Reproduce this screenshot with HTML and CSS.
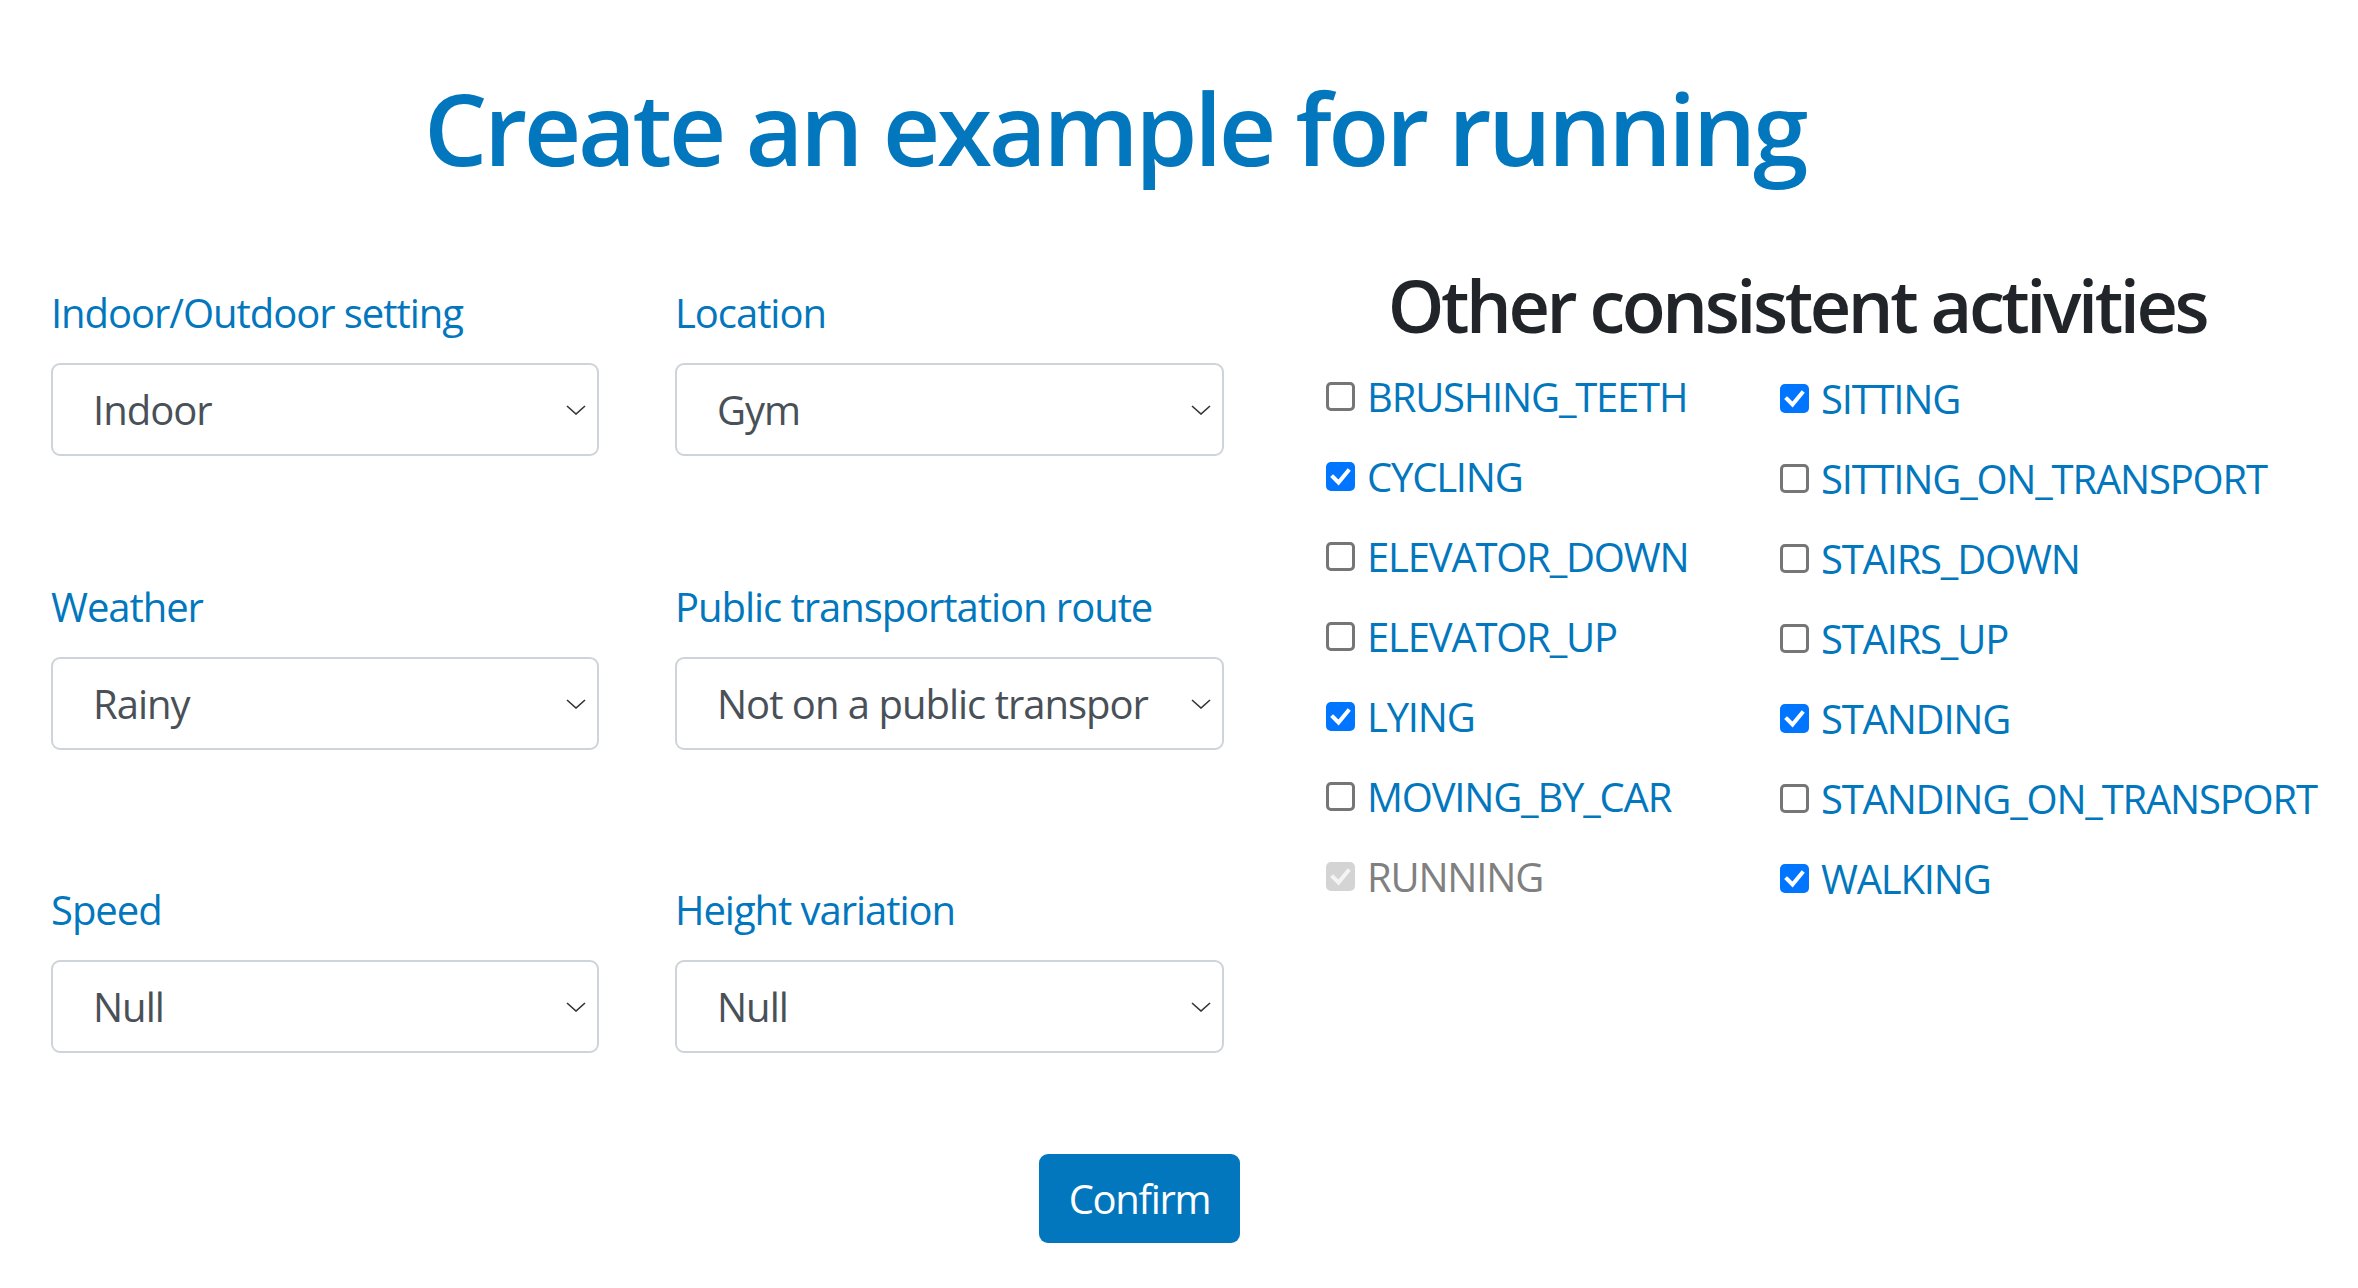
FILE: index.html
```html
<!DOCTYPE html>
<html lang="en">
<head>
<meta charset="utf-8">
<title>Create an example for running</title>
<link rel="stylesheet" href="styles.css">
</head>
<body>
<h1 class="title">Create an example for running</h1>
<div class="main">
  <div class="form-area">
    <div class="form-row">
      <div class="field">
        <label class="field-label">Indoor/Outdoor setting</label>
        <div class="select"><span class="value">Indoor</span><svg class="chev" viewBox="0 0 20 10"><polyline points="1,1 10,9 19,1"/></svg></div>
      </div>
      <div class="field">
        <label class="field-label">Location</label>
        <div class="select"><span class="value">Gym</span><svg class="chev" viewBox="0 0 20 10"><polyline points="1,1 10,9 19,1"/></svg></div>
      </div>
    </div>
    <div class="form-row">
      <div class="field">
        <label class="field-label">Weather</label>
        <div class="select"><span class="value">Rainy</span><svg class="chev" viewBox="0 0 20 10"><polyline points="1,1 10,9 19,1"/></svg></div>
      </div>
      <div class="field">
        <label class="field-label">Public transportation route</label>
        <div class="select"><span class="value">Not on a public transpor</span><svg class="chev" viewBox="0 0 20 10"><polyline points="1,1 10,9 19,1"/></svg></div>
      </div>
    </div>
    <div class="form-row form-row-last">
      <div class="field">
        <label class="field-label">Speed</label>
        <div class="select"><span class="value">Null</span><svg class="chev" viewBox="0 0 20 10"><polyline points="1,1 10,9 19,1"/></svg></div>
      </div>
      <div class="field">
        <label class="field-label">Height variation</label>
        <div class="select"><span class="value">Null</span><svg class="chev" viewBox="0 0 20 10"><polyline points="1,1 10,9 19,1"/></svg></div>
      </div>
    </div>
  </div>
  <div class="activities">
    <h2 class="act-title">Other consistent activities</h2>
    <div class="checks">
      <div class="check-col check-col-left">
        <label class="check"><span class="box"></span>BRUSHING_TEETH</label>
        <label class="check"><span class="box on"><svg viewBox="0 0 29 29"><polyline points="7,15 12.5,20.5 22,9"/></svg></span>CYCLING</label>
        <label class="check"><span class="box"></span>ELEVATOR_DOWN</label>
        <label class="check"><span class="box"></span>ELEVATOR_UP</label>
        <label class="check"><span class="box on"><svg viewBox="0 0 29 29"><polyline points="7,15 12.5,20.5 22,9"/></svg></span>LYING</label>
        <label class="check"><span class="box"></span>MOVING_BY_CAR</label>
        <label class="check check-disabled"><span class="box dis"><svg viewBox="0 0 29 29"><polyline points="7,15 12.5,20.5 22,9"/></svg></span>RUNNING</label>
      </div>
      <div class="check-col check-col-right">
        <label class="check"><span class="box on"><svg viewBox="0 0 29 29"><polyline points="7,15 12.5,20.5 22,9"/></svg></span>SITTING</label>
        <label class="check"><span class="box"></span>SITTING_ON_TRANSPORT</label>
        <label class="check"><span class="box"></span>STAIRS_DOWN</label>
        <label class="check"><span class="box"></span>STAIRS_UP</label>
        <label class="check"><span class="box on"><svg viewBox="0 0 29 29"><polyline points="7,15 12.5,20.5 22,9"/></svg></span>STANDING</label>
        <label class="check"><span class="box"></span>STANDING_ON_TRANSPORT</label>
        <label class="check"><span class="box on"><svg viewBox="0 0 29 29"><polyline points="7,15 12.5,20.5 22,9"/></svg></span>WALKING</label>
      </div>
    </div>
  </div>
</div>
<div class="actions">
  <button class="btn" type="button">Confirm</button>
</div>
</body>
</html>
```

FILE: styles.css
```css
body {
  margin: 0;
  font-family: "Open Sans", sans-serif;
  color: #212529;
  background: #fff;
}

.title {
  width: 2229px;
  margin: 67px 0 0;
  text-align: center;
  font-size: 100px;
  font-weight: 600;
  line-height: 1.2;
  letter-spacing: -3.4px;
  color: #0277bd;
}

.main {
  display: flex;
  align-items: flex-start;
  margin-top: 71px;
}

.form-area {
  flex: none;
  padding-top: 25px;
  padding-left: 51px;
}

.form-row {
  display: grid;
  grid-template-columns: 548px 549px;
  column-gap: 76px;
}

.form-row + .form-row {
  margin-top: 121px;
}

.form-row.form-row-last {
  margin-top: 130px;
}

.field-label {
  display: block;
  font-size: 40px;
  line-height: 60px;
  letter-spacing: -1.05px;
  color: #0277bd;
  margin-bottom: 20px;
}

.select {
  box-sizing: border-box;
  height: 93px;
  display: flex;
  align-items: center;
  border: 2px solid #ced4da;
  border-radius: 9px;
  padding: 0 11px 0 40px;
  font-size: 40px;
  line-height: 60px;
  letter-spacing: -1px;
  color: #495057;
}

.value {
  flex: 1;
  min-width: 0;
  overflow: hidden;
  white-space: nowrap;
  margin-right: 20px;
}

.chev {
  flex: none;
  width: 20px;
  height: 10px;
  fill: none;
  stroke: #333;
  stroke-width: 1.6;
}

.activities {
  flex: none;
  margin-left: 102px;
  width: 942px;
}

.act-title {
  margin: 4px 0 18px;
  text-align: center;
  white-space: nowrap;
  font-size: 72px;
  font-weight: 600;
  line-height: 1.2;
  letter-spacing: -3.4px;
  color: #212529;
}

.checks {
  display: flex;
}

.check-col {
  flex: none;
  display: flex;
  flex-direction: column;
  gap: 20px;
}

.check-col-left {
  width: 454px;
}

.check-col-right {
  padding-top: 2px;
}

.check {
  display: flex;
  align-items: center;
  gap: 12px;
  height: 60px;
  font-size: 40px;
  letter-spacing: -1.2px;
  color: #0277bd;
  white-space: nowrap;
}

.check-disabled {
  color: #808080;
}

.box {
  box-sizing: border-box;
  flex: none;
  width: 29px;
  height: 29px;
  border: 3px solid #767676;
  border-radius: 5px;
  display: flex;
}

.box svg {
  width: 100%;
  height: 100%;
  fill: none;
  stroke: #fff;
  stroke-width: 4;
  stroke-linecap: square;
}

.box.on {
  border: none;
  background: #0075ff;
}

.box.dis {
  border: none;
  background: #d4d4d4;
}

.box.dis svg {
  stroke: #f4f4f4;
}

.actions {
  width: 2279px;
  display: flex;
  justify-content: center;
  margin-top: 101px;
}

.btn {
  width: 201px;
  height: 89px;
  border: none;
  border-radius: 9px;
  background: #0277bd;
  color: #fff;
  font-family: inherit;
  font-size: 40px;
  letter-spacing: -1.3px;
  padding: 0;
}
```
